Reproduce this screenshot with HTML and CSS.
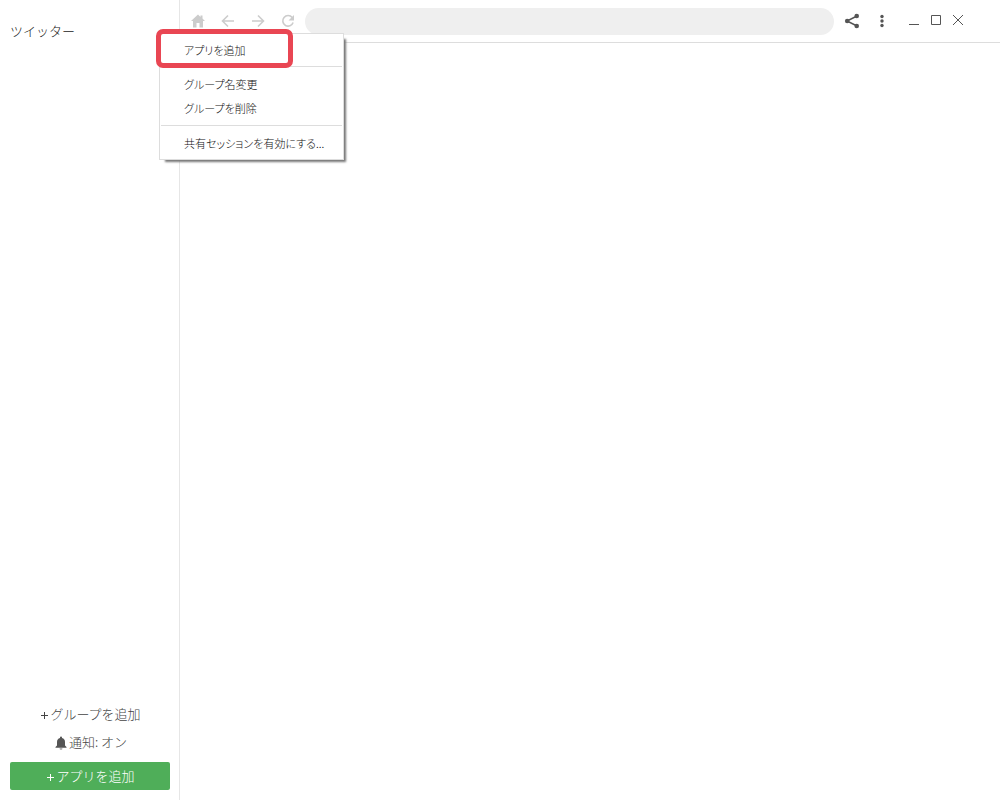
FILE: index.html
```html
<!DOCTYPE html>
<html lang="ja">
<head>
<meta charset="utf-8">
<title>ツイッター</title>
<link rel="stylesheet" href="styles.css">
</head>
<body>
<div class="app">
  <aside class="sidebar">
    <h1 class="group-name">ツイッター</h1>
    <div class="sidebar-actions">
      <button class="text-button" type="button"><span class="plus"></span>グループを追加</button>
      <button class="text-button" type="button">
        <svg class="bell" viewBox="0 0 12 14" aria-hidden="true"><path fill="#555" d="M5 2V1.400a1 1 0 0 1 2 0V2C9 2.500 10 4 10 6v3.500L11.500 11v.7H.5V11L2 9.500V6C2 4 3 2.500 5 2z"/><path fill="#999" d="M4.500 12.300h3a1.500 1.500 0 0 1-3 0z"/></svg>通知: オン
      </button>
      <button class="primary-button" type="button"><span class="plus"></span>アプリを追加</button>
    </div>
  </aside>
  <main class="content">
    <header class="toolbar">
      <button class="tool" type="button" aria-label="ホーム" disabled><svg viewBox="0 0 20 20"><path fill="#ccc" d="M10 3.500 3 10h2v6.500h3.500V12h3v4.500H15V10h2l-2.500-2.400V4.500h-2v1.400z"/></svg></button>
      <button class="tool" type="button" aria-label="戻る" disabled><svg viewBox="0 0 20 20"><path fill="none" stroke="#ccc" stroke-width="1.600" d="M16 10H5M10 4.500 4.500 10l5.500 5.500"/></svg></button>
      <button class="tool" type="button" aria-label="進む" disabled><svg viewBox="0 0 20 20"><path fill="none" stroke="#ccc" stroke-width="1.600" d="M4 10h11M10 4.500l5.500 5.500-5.500 5.500"/></svg></button>
      <button class="tool" type="button" aria-label="再読み込み" disabled><svg viewBox="0 0 20 20"><path fill="none" stroke="#ccc" stroke-width="1.600" d="M14.200 6.500A5.300 5.300 0 1 0 15.100 11.500"/><path fill="#ccc" d="M16 4v5.500h-5.500z"/></svg></button>
      <input class="address" type="text" aria-label="アドレス">
      <button class="tool" type="button" aria-label="共有"><svg viewBox="0 0 20 20"><path fill="none" stroke="#555" stroke-width="1.500" d="M15 5 5 10l10 5"/><g fill="#555"><circle cx="14.700" cy="5" r="2.300"/><circle cx="5.200" cy="10" r="2.300"/><circle cx="14.700" cy="15" r="2.300"/></g></svg></button>
      <button class="tool" type="button" aria-label="メニュー"><svg viewBox="0 0 20 20"><g fill="#555"><circle cx="10" cy="5.500" r="1.700"/><circle cx="10" cy="10" r="1.700"/><circle cx="10" cy="14.500" r="1.700"/></g></svg></button>
      <div class="window-controls">
        <button class="window-button" type="button" aria-label="最小化"><svg viewBox="0 0 12 12"><path fill="none" stroke="#555" d="M1 10.500h10"/></svg></button>
        <button class="window-button" type="button" aria-label="最大化"><svg viewBox="0 0 12 12"><path fill="none" stroke="#555" d="M1.500 1.500h9v9h-9z"/></svg></button>
        <button class="window-button" type="button" aria-label="閉じる"><svg viewBox="0 0 12 12"><path fill="none" stroke="#555" d="m1 1 10 10M11 1 1 11"/></svg></button>
      </div>
    </header>
  </main>
  <div class="menu" role="menu">
    <div class="menu-section highlighted">
      <button class="menu-item" type="button" role="menuitem">アプリを追加</button>
    </div>
    <div class="menu-section">
      <button class="menu-item" type="button" role="menuitem">グループ名変更</button>
      <button class="menu-item" type="button" role="menuitem">グループを削除</button>
    </div>
    <div class="menu-section">
      <button class="menu-item" type="button" role="menuitem">共有セッションを有効にする...</button>
    </div>
  </div>
</div>
</body>
</html>
```
FILE: styles.css
```css
*,
*::after {
  box-sizing: border-box;
}

body {
  margin: 0;
  background: #fff;
  color: #444;
  font: 300 13px/20px "Noto Sans CJK JP", sans-serif;
}

button,
input {
  margin: 0;
  padding: 0;
  border: 0;
  background: none;
  color: inherit;
  font: inherit;
}

svg {
  display: block;
}

.app {
  position: relative;
  display: flex;
  min-height: 100vh;
}

.sidebar {
  display: flex;
  flex: 0 0 180px;
  flex-direction: column;
  justify-content: space-between;
  padding: 21px 9px 10px 10px;
  border-right: 1px solid #e6e6e6;
}

.group-name {
  margin: 0;
  color: #222;
  font-size: 13px;
  font-weight: 300;
}

.sidebar-actions {
  display: flex;
  flex-direction: column;
}

.text-button,
.primary-button {
  display: flex;
  align-items: center;
  justify-content: center;
  height: 28px;
  gap: 2px;
  padding: 0 0 1px 2px;
}

.primary-button {
  margin-top: 6px;
  border-radius: 2px;
  background: #4fae59;
  color: #fff;
}

.plus {
  width: 7px;
  height: 7px;
  margin-top: 3px;
  background:
    linear-gradient(currentColor, currentColor) center / 1px 7px no-repeat,
    linear-gradient(currentColor, currentColor) center / 7px 1px no-repeat;
}

.bell {
  width: 12px;
  height: 14px;
  margin-top: 2px;
}

.content {
  flex: 1;
  min-width: 0;
}

.toolbar {
  display: flex;
  align-items: center;
  height: 43px;
  padding: 0 31px 0 3px;
  border-bottom: 1px solid #ddd;
}

.tool {
  display: flex;
  flex: 0 0 30px;
  align-items: center;
  justify-content: center;
}

.tool svg {
  width: 20px;
  height: 20px;
}

.address {
  flex: 1;
  min-width: 0;
  height: 27px;
  margin: 0 3px 0 2px;
  padding: 0 14px;
  border-radius: 14px;
  background: #efefef;
}

.window-controls {
  display: flex;
  margin: 0 0 2px 6px;
}

.window-button {
  display: flex;
  justify-content: center;
  width: 22px;
}

.window-button svg {
  width: 12px;
  height: 12px;
}

.menu {
  position: absolute;
  top: 33px;
  left: 159px;
  width: 185px;
  padding: 0 1px;
  border: 1px solid #ddd;
  background: #fff;
  box-shadow: 4px 4px 2px -2px #777;
  color: #111;
  font-size: 11px;
  font-feature-settings: "palt";
}

.menu-section {
  position: relative;
  padding: 5px 0 4px;
}

.menu-section + .menu-section {
  border-top: 1px solid #ddd;
}

.menu-section:nth-child(2) {
  padding-bottom: 5px;
}

.menu-item {
  display: block;
  width: 100%;
  height: 24px;
  padding-left: 23px;
  text-align: left;
}

.highlighted {
  padding: 4px 0;
}

.highlighted::after {
  position: absolute;
  z-index: 1;
  top: -5px;
  left: -5px;
  width: 137px;
  height: 39px;
  border: 5px solid #e94653;
  border-radius: 7px;
  content: "";
}
```
